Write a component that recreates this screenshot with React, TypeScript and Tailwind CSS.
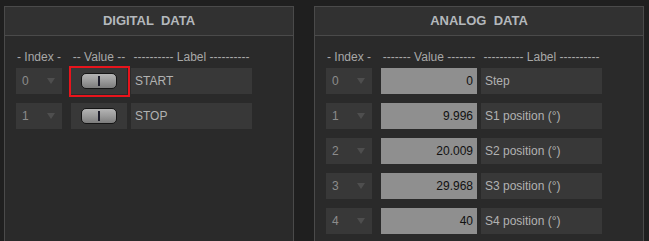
import React from "react";

const font = { fontFamily: '"Liberation Sans", Arial, sans-serif' };

function Arrow() {
  return (
    <svg width="8" height="6" viewBox="0 0 8 6" className="shrink-0">
      <path d="M0 0 L8 0 L4 6 Z" fill="#4e4e4e" />
    </svg>
  );
}

function IndexBox({ n }: { n: number }) {
  return (
    <div className="w-[46px] h-[26px] bg-[#383838] flex items-center justify-between pl-[6px] pr-[7px] text-[12px] text-[#8c8c8c]">
      <span>{n}</span>
      <Arrow />
    </div>
  );
}

function Toggle() {
  return (
    <div className="relative w-[36px] h-[16px] rounded-[5px] border border-[#151515] bg-gradient-to-b from-[#b4b4b4] via-[#9a9a9a] to-[#7c7c7c] flex items-center justify-center">
      <div className="w-[2px] h-[10px] bg-[#1c1c2a]" />
    </div>
  );
}

function LabelBox({ text }: { text: string }) {
  return (
    <div className="w-[121px] h-[26px] bg-[#383838] flex items-center pl-[4px] text-[12px] text-[#b2b2b2]">
      {text}
    </div>
  );
}

function Panel({
  title,
  width,
  children,
}: {
  title: string;
  width: string;
  children: React.ReactNode;
}) {
  return (
    <div className={`${width} h-[260px] shrink-0 border border-[#4a4a4a] bg-[#2a2a2a] flex flex-col`}>
      <div className="h-[29px] shrink-0 bg-[#313131] border-b border-[#4a4a4a] flex items-center justify-center text-[13px] font-bold text-[#b4b8bc] whitespace-pre">
        {title}
      </div>
      <div className="pl-[11px] pt-[14px] flex flex-col">{children}</div>
    </div>
  );
}

export default function App() {
  const digital = [
    { i: 0, label: "START", sel: true },
    { i: 1, label: "STOP", sel: false },
  ];
  const analog = [
    { i: 0, v: "0", label: "Step" },
    { i: 1, v: "9.996", label: "S1 position (°)" },
    { i: 2, v: "20.009", label: "S2 position (°)" },
    { i: 3, v: "29.968", label: "S3 position (°)" },
    { i: 4, v: "40", label: "S4 position (°)" },
  ];
  return (
    <div style={font} className="w-[649px] h-[241px] overflow-hidden bg-[#1f1f1f] flex gap-[20px] pl-[4px] pt-[6px]">
      <Panel title="DIGITAL  DATA" width="w-[290px]">
        <div className="flex gap-[4px] h-[14px] items-center text-[12px] text-[#a8a8a8] whitespace-pre mb-[4px]">
          <div className="w-[46px] text-center">- Index -</div>
          <div className="w-[56px] ml-[5px] text-center">-- Value --</div>
          <div className="w-[121px] text-center">---------- Label ----------</div>
        </div>
        <div className="flex flex-col gap-[9px]">
          {digital.map((r) => (
            <div key={r.i} className="flex items-center">
              <IndexBox n={r.i} />
              <div className="relative ml-[9px] w-[56px] h-[26px] bg-[#383838] flex items-center justify-center">
                <Toggle />
                {r.sel && (
                  <div className="absolute left-[-2px] top-[-2px] w-[61px] h-[31px] border-2 border-[#e8141c]" />
                )}
              </div>
              <div className="ml-[4px]">
                <LabelBox text={r.label} />
              </div>
            </div>
          ))}
        </div>
      </Panel>
      <Panel title="ANALOG  DATA" width="w-[330px]">
        <div className="flex gap-[4px] h-[14px] items-center text-[12px] text-[#a8a8a8] whitespace-pre mb-[4px]">
          <div className="w-[46px] text-center">- Index -</div>
          <div className="w-[96px] ml-[5px] text-center">------- Value -------</div>
          <div className="w-[121px] text-center">---------- Label ----------</div>
        </div>
        <div className="flex flex-col gap-[9px]">
          {analog.map((r) => (
            <div key={r.i} className="flex items-center">
              <IndexBox n={r.i} />
              <div className="ml-[9px] w-[96px] h-[26px] bg-[#8f8f8f] flex items-center justify-end pr-[4px] text-[12px] text-[#111]">
                {r.v}
              </div>
              <div className="ml-[4px]">
                <LabelBox text={r.label} />
              </div>
            </div>
          ))}
        </div>
      </Panel>
    </div>
  );
}
